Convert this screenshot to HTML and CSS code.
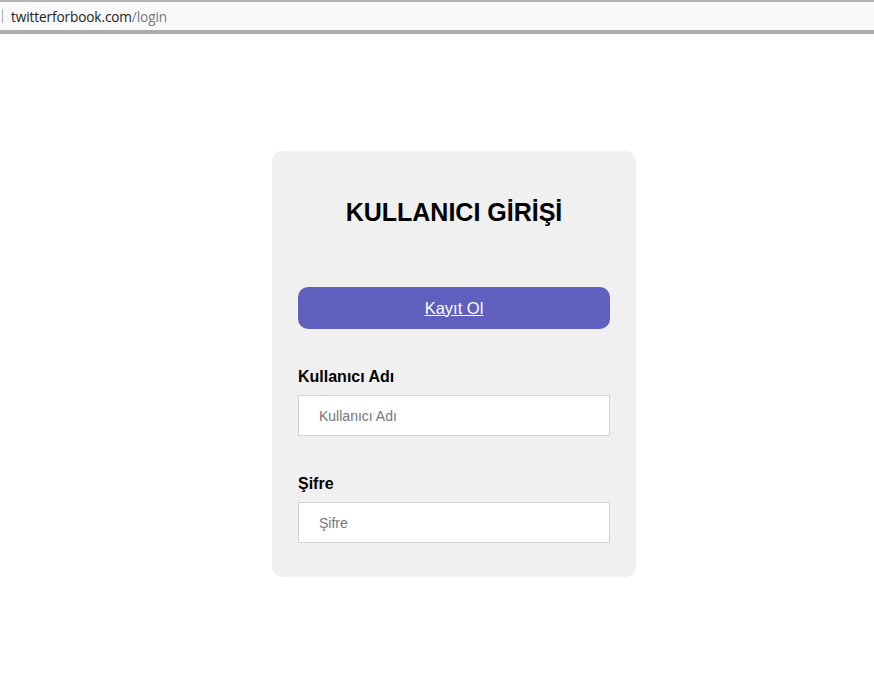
FILE: index.html
```html
<!DOCTYPE html>
<html lang="tr">
<head>
<meta charset="utf-8">
<title>Login</title>
<link rel="stylesheet" href="styles.css">
</head>
<body>
<div class="urlbar">
  <span class="caret"></span>
  <span class="url"><span class="host">twitterforbook.com</span><span class="path">/login</span></span>
</div>
<main class="page">
  <form class="card">
    <h1 class="title">KULLANICI GİRİŞİ</h1>
    <a class="register" href="#">Kayıt Ol</a>
    <label class="label" for="u">Kullanıcı Adı</label>
    <input class="field" id="u" type="text" placeholder="Kullanıcı Adı">
    <label class="label label-2" for="p">Şifre</label>
    <input class="field" id="p" type="password" placeholder="Şifre">
  </form>
</main>
</body>
</html>
```
FILE: styles.css
```css
* { box-sizing: border-box; }
html, body { margin: 0; padding: 0; background: #fff; }
body { font-family: "Liberation Sans", Arial, sans-serif; }

.urlbar {
  height: 34px;
  background: #f9f9f9;
  border-top: 2px solid #b4b4b4;
  border-bottom: 4px solid #ababab;
  display: flex;
  align-items: center;
  padding-left: 2px;
}
.caret {
  width: 1px;
  height: 14px;
  background: #b0b0b0;
  margin-right: 8px;
}
.url { font-size: 13.6px; font-family: "Open Sans", "Liberation Sans", sans-serif; letter-spacing: -0.1px; }
.host { color: #222; }
.path { color: #787878; }

.page {
  display: flex;
  justify-content: center;
  padding-top: 117px;
}
.card {
  width: 364px;
  height: 426px;
  margin-left: 34px;
  background: #f0f0f0;
  border-radius: 10px;
  padding: 46px 26px 0 26px;
  display: flex;
  flex-direction: column;
}
.title {
  margin: 0;
  text-align: center;
  font-size: 25px;
  font-weight: bold;
  color: #000;
  line-height: 30px;
}
.register {
  margin-top: 60px;
  height: 42px;
  border-radius: 10px;
  background: #5f5fbf;
  color: #fff;
  font-size: 16.5px;
  display: flex;
  align-items: center;
  justify-content: center;
  text-decoration: underline;
}
.label {
  margin-top: 38px;
  font-size: 16px;
  font-weight: bold;
  color: #000;
  line-height: 20px;
}
.label-2 { margin-top: 38px; }
.field {
  margin-top: 8px;
  height: 41px;
  border: 1px solid #d3d3d3;
  background: #fff;
  padding: 0 20px;
  font-size: 14px;
  font-family: "Liberation Sans", Arial, sans-serif;
  outline: none;
}
.field::placeholder { color: #777; }
```
